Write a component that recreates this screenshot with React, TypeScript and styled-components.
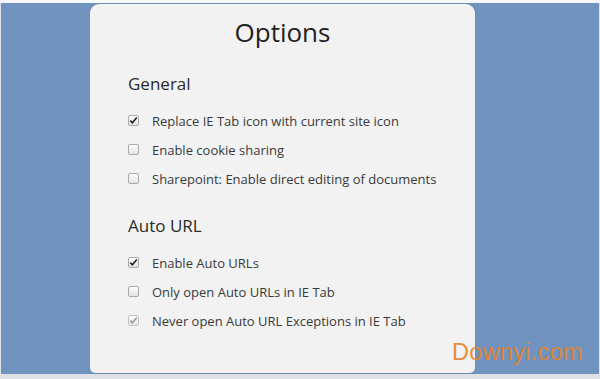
import React from "react";
import styled, { createGlobalStyle } from "styled-components";

const Global = createGlobalStyle`
  html, body { margin: 0; padding: 0; }
  body { font-family: "Open Sans", "Noto Sans", sans-serif; background: #eef0f3; }
`;

const Frame = styled.div`
  width: 600px;
  height: 379px;
  box-sizing: border-box;
  padding: 3px 1px 5px 1px;
  background: linear-gradient(#f6f8fb 0 3px, #dfe1e4 3px);
  position: relative;
  overflow: hidden;
`;

const Desk = styled.div`
  height: 100%;
  background: #7093c0;
  padding: 1px 0 0 89px;
  box-sizing: border-box;
`;

const Panel = styled.div`
  width: 385px;
  height: 369px;
  box-sizing: border-box;
  background: #f2f2f2;
  border-radius: 9px 9px 5px 5px;
  box-shadow: 0 0 1px rgba(40, 50, 70, 0.5);
  padding: 10px 0 0 38px;
  color: #333;
`;

const Title = styled.h1`
  margin: 0 0 0 -38px;
  font-size: 26px;
  font-weight: 400;
  line-height: 36px;
  text-align: center;
  color: #222;
`;

const Section = styled.section<{ $top: number }>`
  margin-top: ${(p) => p.$top}px;
`;

const Heading = styled.h2`
  margin: 0 0 10px 0;
  font-size: 17px;
  font-weight: 400;
  line-height: 24px;
  color: #2a2a2a;
`;

const Row = styled.label`
  display: flex;
  align-items: center;
  height: 29px;
  font-size: 13px;
  color: #3a3a3a;
`;

const Box = styled.span<{ $dim?: boolean }>`
  width: 11px;
  height: 11px;
  box-sizing: border-box;
  border: 1px solid ${(p) => (p.$dim ? "#c4c4c4" : "#a9a9a9")};
  border-radius: 2px;
  background: linear-gradient(#fdfdfd, #e4e4e4);
  margin-right: 13px;
  display: flex;
  align-items: center;
  justify-content: center;
  flex: none;
`;

const Watermark = styled.div`
  position: absolute;
  left: 452px;
  top: 339px;
  font-family: "Liberation Sans", Arial, sans-serif;
  font-size: 23.5px;
  color: #e58326;
  opacity: 0.9;
  letter-spacing: 0.3px;
`;

type Item = { text: string; checked?: boolean; dim?: boolean };

const Check = ({ dim }: { dim?: boolean }) => (
  <svg width="9" height="9" viewBox="0 0 9 9">
    <path
      d="M1.3 4.6 L3.4 6.8 L7.8 1.6"
      fill="none"
      stroke={dim ? "#9a9a9a" : "#222"}
      strokeWidth="1.6"
    />
  </svg>
);

const Option = ({ text, checked, dim }: Item) => (
  <Row>
    <Box $dim={dim}>{checked && <Check dim={dim} />}</Box>
    {text}
  </Row>
);

const general: Item[] = [
  { text: "Replace IE Tab icon with current site icon", checked: true },
  { text: "Enable cookie sharing" },
  { text: "Sharepoint: Enable direct editing of documents" },
];

const auto: Item[] = [
  { text: "Enable Auto URLs", checked: true },
  { text: "Only open Auto URLs in IE Tab" },
  { text: "Never open Auto URL Exceptions in IE Tab", checked: true, dim: true },
];

export default function App() {
  return (
    <>
      <Global />
      <Frame>
        <Desk>
          <Panel>
            <Title>Options</Title>
            <Section $top={22}>
              <Heading>General</Heading>
              {general.map((i) => (
                <Option key={i.text} {...i} />
              ))}
            </Section>
            <Section $top={21}>
              <Heading>Auto URL</Heading>
              {auto.map((i) => (
                <Option key={i.text} {...i} />
              ))}
            </Section>
          </Panel>
        </Desk>
        <Watermark>Downyi.com</Watermark>
      </Frame>
    </>
  );
}
